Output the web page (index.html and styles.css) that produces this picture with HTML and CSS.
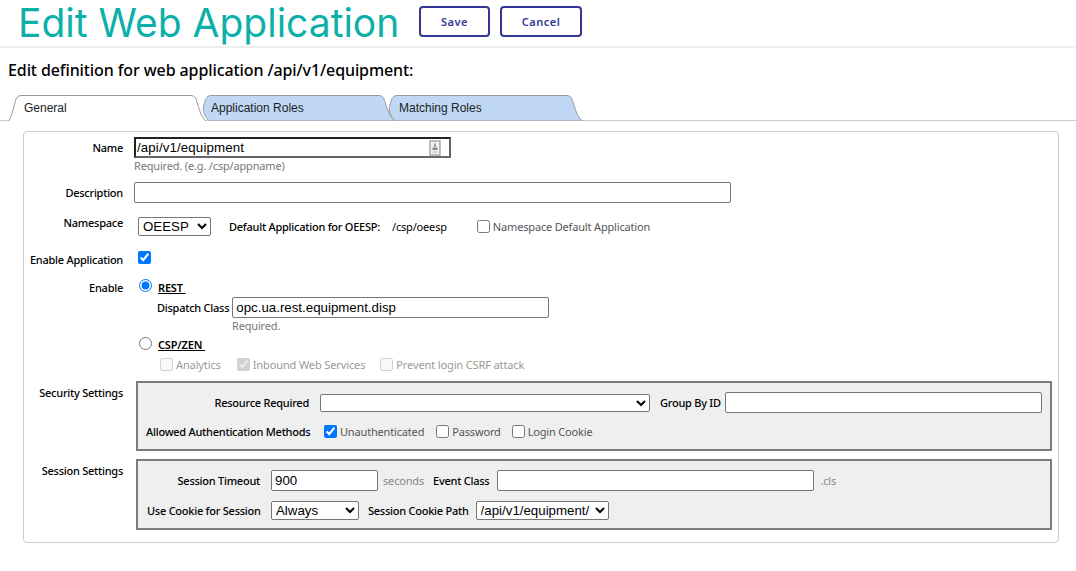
FILE: index.html
```html
<!DOCTYPE html>
<html lang="en">
<head>
  <meta charset="UTF-8">
  <meta name="viewport" content="width=device-width, initial-scale=1.0">
  <title>Edit Web Application</title>
  <link rel="stylesheet" href="styles.css">
</head>
<body>

  <header class="title-bar">
    <h1>Edit Web Application</h1>
    <button class="action save">Save</button>
    <button class="action cancel">Cancel</button>
  </header>

  <h2 class="page-sub">Edit definition for web application /api/v1/equipment:</h2>

  <div class="tabs">
    <div class="tab tab-general">
      <svg class="tab-bg" width="198" height="26" viewBox="0 0 198 26"><path d="M0.5 26 C4 22 6 10 8 4 Q9.5 0.5 13 0.5 H183 Q186 0.5 187.5 3 C190 8 192 22 198 26" fill="#fff" stroke="#999"/></svg>
      <span>General</span>
    </div>
    <div class="tab tab-roles">
      <svg class="tab-bg" width="198" height="26" viewBox="0 0 198 26"><path d="M11 26 C7 22 4 16 6 10 C7 6 8 0.5 13 0.5 H181 Q184 0.5 185.5 3 C188 8 190 22 197.5 26 Z" fill="#c0d8f5" stroke="#999"/></svg>
      <span>Application Roles</span>
    </div>
    <div class="tab tab-match">
      <svg class="tab-bg" width="195" height="26" viewBox="0 0 195 26"><path d="M7 26 C3 22 0 16 2 10 C3 6 4 0.5 9 0.5 H179 Q182 0.5 183.5 3 C186 8 188 22 194.5 26 Z" fill="#c0d8f5" stroke="#999"/></svg>
      <span>Matching Roles</span>
    </div>
  </div>

  <main class="panel">

    <div class="row row-name">
      <label class="lbl">Name</label>
      <div class="ctl">
        <div class="name-input">
          <span>/api/v1/equipment</span>
          <svg class="key-icon" width="12" height="16" viewBox="0 0 12 16"><rect x="1" y="1" width="10" height="14" fill="#f2f2f2" stroke="#a8a8a8" stroke-width="1.5"/><path d="M6 3.5 V7" stroke="#888" stroke-width="1.5"/><path d="M3.5 7.5 H8.500 V10 H3.500 Z" fill="#888"/><path d="M3.500 12 H8.500" stroke="#bbb"/></svg>
        </div>
        <div class="hint">Required. (e.g. /csp/appname)</div>
      </div>
    </div>

    <div class="row row-desc">
      <label class="lbl">Description</label>
      <div class="ctl"><input class="txt w597" type="text"></div>
    </div>

    <div class="row row-ns">
      <label class="lbl">Namespace</label>
      <div class="ctl ns-line">
        <select class="sel sel-ns"><option>OEESP</option></select>
        <b class="sm">Default Application for OEESP:</b>
        <span class="ns-path">/csp/oeesp</span>
        <input class="chk chk-ns" type="checkbox">
        <span class="opt">Namespace Default Application</span>
      </div>
    </div>

    <div class="row row-app">
      <label class="lbl">Enable Application</label>
      <div class="ctl"><input class="chk chk-app" type="checkbox" checked></div>
    </div>

    <div class="row row-enable">
      <label class="lbl">Enable</label>
      <div class="ctl">
        <div class="radio-line radio-rest">
          <input class="rad" type="radio" name="kind" checked>
          <b class="radio-name">REST&nbsp;</b>
        </div>
        <div class="dispatch">
          <b class="sm">Dispatch Class</b>
          <input class="txt w317" type="text" value="opc.ua.rest.equipment.disp">
        </div>
        <div class="hint hint-disp">Required.</div>
        <div class="radio-line radio-csp">
          <input class="rad" type="radio" name="kind">
          <b class="radio-name">CSP/ZEN&nbsp;</b>
        </div>
        <div class="csp-opts">
          <input class="chk" type="checkbox" disabled><span class="off off-a">Analytics</span>
          <input class="chk" type="checkbox" checked disabled><span class="off off-b">Inbound Web Services</span>
          <input class="chk" type="checkbox" disabled><span class="off">Prevent login CSRF attack</span>
        </div>
      </div>
    </div>

    <div class="row row-sec">
      <label class="lbl">Security Settings</label>
      <div class="box box-sec">
        <div class="box-line line-res">
          <b class="sm cap cap-sec">Resource Required</b>
          <select class="sel sel-res"><option></option></select>
          <b class="sm group-lbl">Group By ID</b>
          <input class="txt w317" type="text">
        </div>
        <div class="box-line line-auth">
          <b class="sm cap cap-sec">Allowed Authentication Methods</b>
          <input class="chk" type="checkbox" checked><span class="opt opt-a">Unauthenticated</span>
          <input class="chk" type="checkbox"><span class="opt opt-b">Password</span>
          <input class="chk" type="checkbox"><span class="opt">Login Cookie</span>
        </div>
      </div>
    </div>

    <div class="row row-ses">
      <label class="lbl">Session Settings</label>
      <div class="box box-ses">
        <div class="box-line line-time">
          <b class="sm cap cap-ses">Session Timeout</b>
          <input class="txt w107" type="text" value="900">
          <span class="unit">seconds</span>
          <b class="sm event-lbl">Event Class</b>
          <input class="txt w317" type="text">
          <span class="unit unit-cls">.cls</span>
        </div>
        <div class="box-line line-cookie">
          <b class="sm cap cap-ses">Use Cookie for Session</b>
          <select class="sel sel-cookie"><option>Always</option></select>
          <b class="sm path-lbl">Session Cookie Path</b>
          <select class="sel sel-path"><option>/api/v1/equipment/</option></select>
        </div>
      </div>
    </div>

  </main>

</body>
</html>
```

FILE: styles.css
```css
body {
  margin: 0;
  background-color: #fff;
  font-family: "Noto Sans", sans-serif;
  font-size: 11px;
  letter-spacing: -0.17px;
  color: #000;
  overflow: hidden;
}

.title-bar {
  display: flex;
  align-items: flex-start;
  height: 46px;
  padding-left: 18px;
  border-bottom: 2px solid #eee;
}

.title-bar h1 {
  margin: 0 21px 0 0;
  width: 380px;
  font-family: Inter, sans-serif;
  font-size: 39px;
  font-weight: 400;
  letter-spacing: 0;
  line-height: 46px;
  color: #0cb0a8;
  white-space: nowrap;
}

.action {
  margin-top: 6px;
  height: 31px;
  border: 2px solid #333695;
  border-radius: 4px;
  background-color: #fff;
  color: #333695;
  font-family: "Noto Sans", sans-serif;
  font-size: 11px;
  font-weight: 600;
  letter-spacing: 0.5px;
  padding: 0;
}

.save { width: 71px; margin-right: 10px; }
.cancel { width: 82px; }

.page-sub {
  margin: 11px 0 0 8px;
  font-size: 16px;
  font-weight: 500;
  line-height: 22px;
  letter-spacing: -0.1px;
}

.tabs {
  display: flex;
  height: 25px;
  margin-top: 14px;
  border-bottom: 1px solid #ccc;
  font-family: "Liberation Sans", Arial, sans-serif;
  font-size: 12px;
  letter-spacing: 0;
}

.tab {
  position: relative;
  box-sizing: border-box;
  height: 26px;
  color: #222;
  line-height: 26px;
}

.tab-bg {
  position: absolute;
  left: 0;
  top: 0;
}

.tab span {
  position: relative;
}

.tab-general { width: 198px; margin-left: 8px; z-index: 3; padding-left: 16px; }
.tab-roles { width: 198px; margin-left: -8px; z-index: 2; padding-left: 13px; }
.tab-match { width: 195px; margin-left: -8px; z-index: 1; padding-left: 11px; }

.panel {
  box-sizing: border-box;
  width: 1036px;
  height: 412px;
  margin: 10px 0 0 23px;
  padding: 5px 0 0;
  border: 1px solid #ccc;
  border-radius: 4px;
}

.row {
  display: flex;
  align-items: flex-start;
}

.lbl {
  flex: none;
  width: 99px;
  margin-right: 11px;
  text-align: right;
  font-weight: 500;
  letter-spacing: -0.25px;
  line-height: 16px;
  white-space: nowrap;
}

.sm {
  font-weight: 500;
  letter-spacing: -0.25px;
  white-space: nowrap;
}

.ctl {
  flex: none;
}

.txt, .sel {
  box-sizing: border-box;
  height: 21px;
  border: 1px solid #767676;
  border-radius: 2px;
  background-color: #fff;
  font-family: "Liberation Sans", Arial, sans-serif;
  font-size: 13.3px;
  padding: 1px 3px;
  margin: 0;
  color: #000;
}

.sel { height: 19px; padding: 0; }

.w597 { width: 597px; }
.w317 { width: 317px; }
.w107 { width: 107px; }

.chk, .rad { margin: 0; flex: none; }
.chk { width: 13px; height: 13px; }
.rad { width: 13px; height: 13px; }

.row-name .lbl { margin-top: 3px; }

.name-input {
  box-sizing: border-box;
  display: flex;
  justify-content: space-between;
  align-items: center;
  width: 317px;
  height: 21px;
  padding: 0 8px 0 1px;
  border: 2px solid #222;
  border-right-color: #666;
  border-bottom-color: #666;
  font-family: "Liberation Sans", Arial, sans-serif;
  font-size: 13.3px;
  letter-spacing: 0.12px;
}

.key-icon { flex: none; }

.hint {
  color: #777;
  line-height: 15px;
}

.row-desc { margin-top: 9px; }
.row-desc .lbl { margin-top: 3px; }

.row-ns { margin-top: 13px; }
.row-ns .lbl { margin-top: -1px; }
.ns-line { display: flex; align-items: center; padding-left: 4px; height: 21px; }
.sel-ns { width: 73px; margin-right: 18px; }
.ns-path { margin: 0 30px 0 12px; }
.opt { color: #555; }
.chk-ns { margin-right: 3px; }

.row-app { margin-top: 14px; }
.row-app .lbl { margin-top: 1px; }
.chk-app { margin-left: 4px; display: block; }

.row-enable { margin-top: 12px; }
.radio-line { display: flex; align-items: center; padding-left: 5px; height: 16px; }
.radio-rest .rad { margin-bottom: 6px; }
.radio-csp .rad { margin-bottom: 2px; }
.radio-name { margin: -2px 0 0 6px; text-decoration: underline; font-weight: 600; }
.radio-csp .radio-name { margin-top: 0; }
.dispatch { display: flex; align-items: center; gap: 3px; margin-top: 1px; padding-left: 23px; }
.hint-disp { margin: 0 0 0 98px; }
.radio-csp { margin-top: 3px; }
.csp-opts { display: flex; align-items: center; margin-top: 4px; padding-left: 26px; height: 16px; }
.csp-opts .chk { margin-right: 3px; }
.off { color: #999; letter-spacing: -0.12px; }
.off-a { margin-right: 16px; }
.off-b { margin-right: 15px; }

.box {
  box-sizing: border-box;
  width: 916px;
  margin-left: 2px;
  border: 2px solid #7c7c7c;
  background-color: #efefef;
}

.box-sec { height: 70px; padding: 9px 0 0 8px; }
.box-ses { height: 71px; padding: 9px 0 0 9px; }

.box-line { display: flex; align-items: center; }

.cap { text-align: right; flex: none; }
.cap-sec { width: 163px; margin-right: 11px; }
.cap-ses { width: 113px; margin-right: 11px; }

.row-sec { margin-top: 9px; }
.row-ses { margin-top: 8px; }
.row-sec .lbl, .row-ses .lbl { margin-top: 4px; }

.sel-res { width: 330px; height: 18px; }
.group-lbl { margin: 0 4px 0 10px; }

.line-auth { margin-top: 10px; height: 16px; }
.line-auth .cap-sec { margin-right: 15px; }
.line-auth .chk { margin-right: 3px; }
.opt-a { margin-right: 12px; }
.opt-b { margin-right: 11px; }

.unit { color: #888; margin-left: 5px; }
.event-lbl { margin: 0 8px 0 9px; }
.unit-cls { margin-left: 6px; }

.line-cookie { margin-top: 10px; }
.sel-cookie { width: 88px; }
.path-lbl { margin: 0 7px 0 9px; }
.sel-path { width: 133px; }
```
